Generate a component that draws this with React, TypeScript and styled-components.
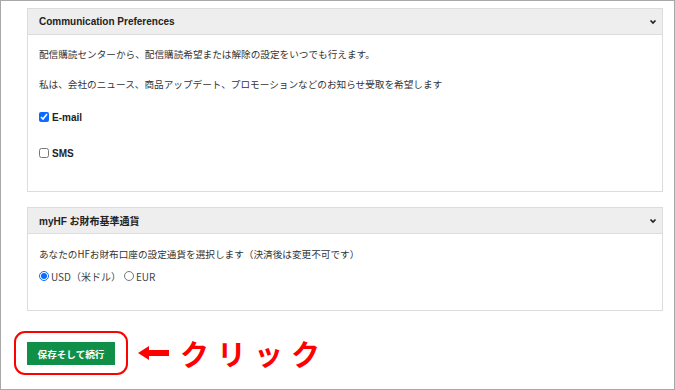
import React, { useState } from 'react';
import styled, { createGlobalStyle } from 'styled-components';

const GlobalStyle = createGlobalStyle`
  html, body {
    margin: 0;
    padding: 0;
    background: #fff;
  }
  body {
    font-family: "Liberation Sans", "Noto Sans CJK JP", sans-serif;
    color: #333;
  }
`;

const Frame = styled.div`
  box-sizing: border-box;
  width: 675px;
  height: 390px;
  border: 1px solid #a8a8a8;
  padding: 7px 11px 0 26px;
  display: flex;
  flex-direction: column;
  overflow: hidden;
`;

const Panel = styled.section<{ $gap?: number }>`
  border: 1px solid #dcdcdc;
  margin-top: ${(p) => p.$gap ?? 0}px;
  background: #fff;
`;

const PanelHeader = styled.div`
  height: 26px;
  box-sizing: border-box;
  background: #eeeeee;
  border-bottom: 1px solid #dcdcdc;
  display: flex;
  align-items: center;
  justify-content: space-between;
  padding: 0 5px 0 11px;
`;

const PanelTitle = styled.h3`
  margin: 0;
  font-size: 10px;
  font-weight: 700;
  color: #222;
`;

const PanelBody = styled.div<{ $pt: number; $pb: number }>`
  padding: ${(p) => p.$pt}px 11px ${(p) => p.$pb}px 11px;
`;

const Text = styled.p<{ $mt?: number }>`
  margin: ${(p) => p.$mt ?? 0}px 0 0;
  font-family: "Noto Sans CJK JP", sans-serif;
  font-size: 9.65px;
  line-height: 14px;
  color: #333;
  white-space: nowrap;
`;

const CheckRow = styled.label<{ $mt: number }>`
  display: flex;
  align-items: center;
  gap: 2px;
  margin-top: ${(p) => p.$mt}px;
  height: 14px;
  font-size: 10px;
  font-weight: 700;
  color: #222;
`;

const Check = styled.input`
  width: 10px;
  height: 10px;
  margin: 0 1px 0 0;
  accent-color: #0a6cff;
`;

const RadioGroup = styled.div`
  display: flex;
  align-items: center;
  margin-top: 8px;
  height: 14px;
  font-family: "Noto Sans CJK JP", sans-serif;
  font-size: 10px;
  color: #444;
`;

const RadioLabel = styled.label`
  display: flex;
  align-items: center;
  margin-right: 3px;
`;

const Radio = styled.input`
  width: 10px;
  height: 10px;
  margin: 0 2px 0 0;
  accent-color: #0a6cff;
`;

const ActionRow = styled.div`
  display: flex;
  align-items: center;
  margin-top: 20px;
  margin-left: -13px;
`;

const Highlight = styled.div`
  border: 2px solid #ff0000;
  border-radius: 11px;
  padding: 9px 11px 8px 11px;
`;

const SaveButton = styled.button`
  width: 88px;
  height: 23px;
  border: none;
  background: #0f8f48;
  color: #fff;
  font-family: "Noto Sans CJK JP", sans-serif;
  font-size: 9.6px;
  font-weight: 700;
  padding: 0;
  cursor: pointer;
`;

const Arrow = styled.svg`
  margin-left: 10px;
  flex: none;
`;

const ClickText = styled.span`
  margin-left: 11px;
  font-family: "Noto Sans CJK JP", sans-serif;
  font-size: 29px;
  font-weight: 700;
  letter-spacing: 8px;
  color: #ff0000;
  line-height: 1;
`;

const Chevron = () => (
  <svg width="8" height="6" viewBox="0 0 8 6">
    <polyline points="1.5,1.5 4,4 6.5,1.5" fill="none" stroke="#222" strokeWidth="1.7" />
  </svg>
);

export default function App() {
  const [email, setEmail] = useState(true);
  const [sms, setSms] = useState(false);
  const [currency, setCurrency] = useState('USD');

  return (
    <>
      <GlobalStyle />
      <Frame>
        <Panel>
          <PanelHeader>
            <PanelTitle>Communication Preferences</PanelTitle>
            <Chevron />
          </PanelHeader>
          <PanelBody $pt={12} $pb={31}>
            <Text>配信購読センターから、配信購読希望または解除の設定をいつでも行えます。</Text>
            <Text $mt={16}>私は、会社のニュース、商品アップデート、プロモーションなどのお知らせ受取を希望します</Text>
            <CheckRow $mt={19}>
              <Check type="checkbox" checked={email} onChange={() => setEmail(!email)} />
              E-mail
            </CheckRow>
            <CheckRow $mt={22}>
              <Check type="checkbox" checked={sms} onChange={() => setSms(!sms)} />
              SMS
            </CheckRow>
          </PanelBody>
        </Panel>

        <Panel $gap={15}>
          <PanelHeader>
            <PanelTitle>myHF お財布基準通貨</PanelTitle>
            <Chevron />
          </PanelHeader>
          <PanelBody $pt={13} $pb={27}>
            <Text>あなたのHFお財布口座の設定通貨を選択します（決済後は変更不可です）</Text>
            <RadioGroup>
              <RadioLabel>
                <Radio
                  type="radio"
                  name="currency"
                  checked={currency === 'USD'}
                  onChange={() => setCurrency('USD')}
                />
                USD（米ドル）
              </RadioLabel>
              <RadioLabel>
                <Radio
                  type="radio"
                  name="currency"
                  checked={currency === 'EUR'}
                  onChange={() => setCurrency('EUR')}
                />
                EUR
              </RadioLabel>
            </RadioGroup>
          </PanelBody>
        </Panel>

        <ActionRow>
          <Highlight>
            <SaveButton type="button">保存そして続行</SaveButton>
          </Highlight>
          <Arrow width="31" height="14" viewBox="0 0 31 14">
            <polygon points="0,7 11,0 11,4 31,4 31,10 11,10 11,14" fill="#ff0000" />
          </Arrow>
          <ClickText>クリック</ClickText>
        </ActionRow>
      </Frame>
    </>
  );
}
